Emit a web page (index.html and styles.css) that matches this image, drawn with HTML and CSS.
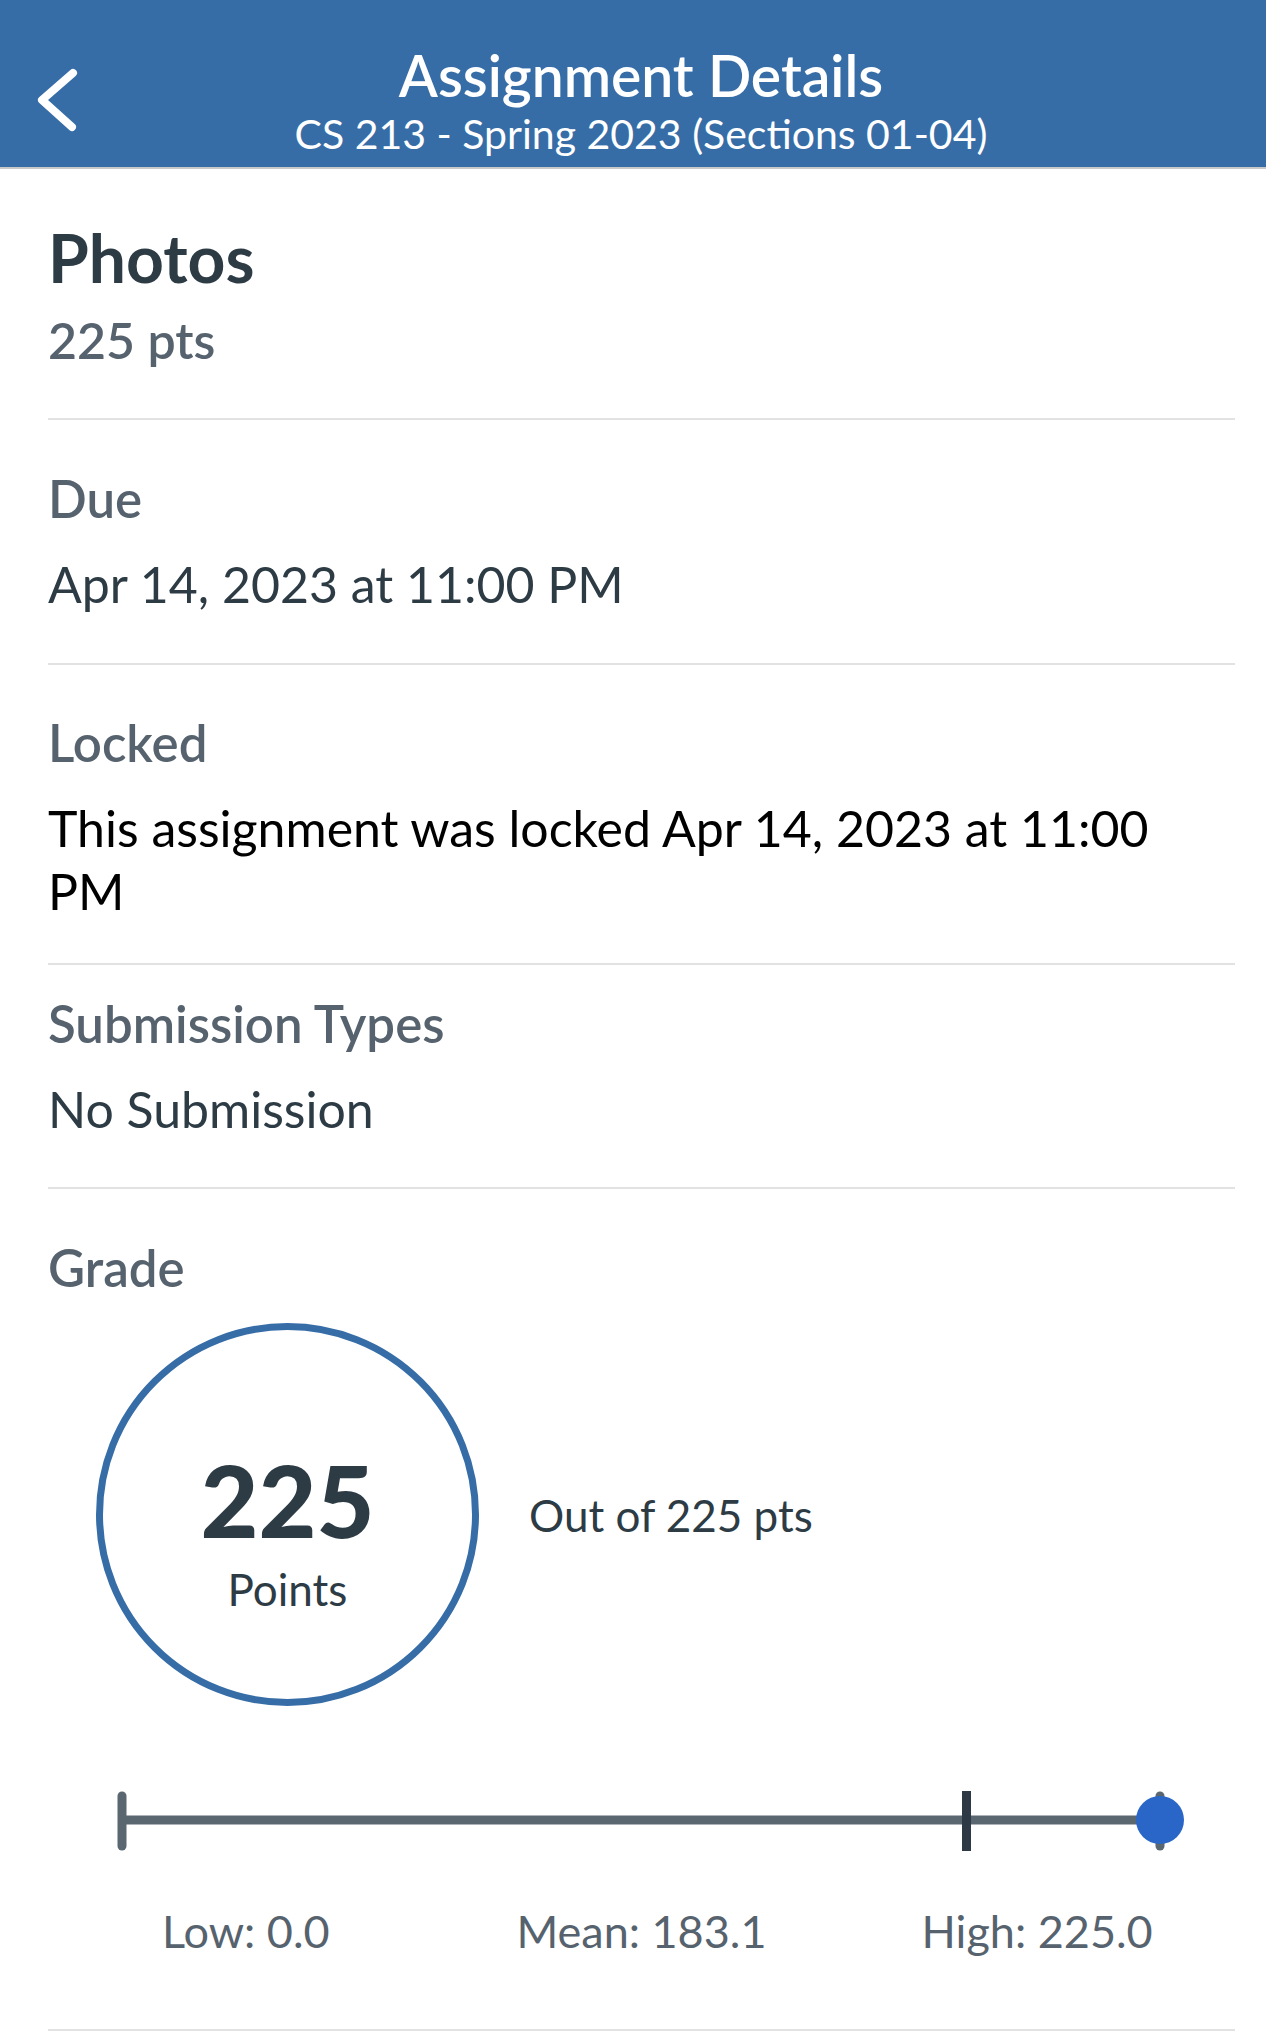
FILE: index.html
```html
<!DOCTYPE html>
<html lang="en">
<head>
<meta charset="utf-8">
<title>Assignment Details</title>
<link rel="stylesheet" href="styles.css">
</head>
<body>
<header class="navbar">
  <button class="back" aria-label="Back">
    <svg width="60" height="80" viewBox="0 0 60 80"><polyline points="45,13 14,40 44,67" fill="none" stroke="#fff" stroke-width="8" stroke-linecap="round" stroke-linejoin="round"/></svg>
  </button>
  <div class="nav-titles">
    <div class="nav-title">Assignment Details</div>
    <div class="nav-subtitle">CS 213 - Spring 2023 (Sections 01-04)</div>
  </div>
  <div></div>
</header>
<main class="content">
  <section class="summary">
    <h1 class="title">Photos</h1>
    <div class="points">225 pts</div>
  </section>
  <section class="detail">
    <div class="label">Due</div>
    <div class="value">Apr 14, 2023 at 11:00 PM</div>
  </section>
  <section class="detail locked">
    <div class="label">Locked</div>
    <div class="value value-black">This assignment was locked Apr 14, 2023 at 11:00 PM</div>
  </section>
  <section class="detail compact">
    <div class="label">Submission Types</div>
    <div class="value">No Submission</div>
  </section>
  <section class="grade">
    <div class="label">Grade</div>
    <div class="grade-row">
      <div class="circle">
        <div class="score">225</div>
        <div class="score-unit">Points</div>
      </div>
      <div class="out-of">Out of 225 pts</div>
    </div>
    <svg class="stats-bar" width="1187" height="70" viewBox="0 0 1187 70">
      <line x1="74" y1="35" x2="1112" y2="35" stroke="#5A6670" stroke-width="9"/>
      <line x1="74" y1="11" x2="74" y2="61" stroke="#5A6670" stroke-width="9" stroke-linecap="round"/>
      <line x1="1112" y1="11" x2="1112" y2="61" stroke="#5A6670" stroke-width="9" stroke-linecap="round"/>
      <rect x="914" y="6" width="9" height="60" fill="#2D3A45"/>
      <circle cx="1112" cy="35" r="24" fill="#2A66C8"/>
    </svg>
    <div class="stats-labels">
      <span>Low: 0.0</span>
      <span>Mean: 183.1</span>
      <span>High: 225.0</span>
    </div>
  </section>
</main>
</body>
</html>
```

FILE: styles.css
```css
* { box-sizing: border-box; }

body {
  margin: 0;
  background: #ffffff;
  font-family: Lato, "Open Sans", "Liberation Sans", sans-serif;
  color: #2D3B45;
}

.navbar {
  display: grid;
  grid-template-columns: 1fr auto 1fr;
  align-items: start;
  height: 169px;
  background: #376DA7;
  border-bottom: 2px solid #C9C9C9;
  color: #ffffff;
}

.back {
  justify-self: start;
  margin: 60px 0 0 28px;
  width: 60px;
  height: 80px;
  padding: 0;
  border: 0;
  background: none;
}

.back svg { display: block; }

.nav-titles {
  padding: 45px 0 0 16px;
  text-align: center;
  white-space: nowrap;
}

.nav-title {
  font-size: 57px;
  font-weight: 600;
  line-height: 60px;
}

.nav-subtitle {
  margin-top: 7px;
  font-size: 41px;
  font-weight: 400;
  line-height: 44px;
}

.content {
  padding: 0 31px 0 48px;
}

.content section {
  border-bottom: 2px solid #E2E2E2;
}

.summary {
  padding: 49px 0 49px;
}

.title {
  margin: 0;
  font-size: 66px;
  font-weight: 700;
  line-height: 80px;
  color: #2D3B45;
}

.points {
  margin-top: 13px;
  font-size: 50px;
  font-weight: 600;
  line-height: 58px;
  color: #56636E;
}

.detail {
  padding: 49px 0 46.5px;
}

.detail.locked {
  padding: 48px 0 40.5px;
}

.detail.compact {
  padding-top: 28.5px;
}

.label {
  font-size: 51px;
  font-weight: 600;
  line-height: 60px;
  color: #56636E;
}

.value {
  max-width: 1170px;
  margin-top: 24px;
  font-size: 50px;
  font-weight: 400;
  line-height: 63px;
  color: #2D3B45;
}

.value-black {
  color: #000000;
}

.grade {
  padding: 48.5px 0 72px;
}

.grade-row {
  display: flex;
  align-items: center;
  gap: 50px;
  margin: 25.5px 0 0 48px;
}

.circle {
  display: flex;
  flex-direction: column;
  align-items: center;
  flex: none;
  width: 383px;
  height: 383px;
  padding-top: 119px;
  border: 7px solid #376DA7;
  border-radius: 50%;
}

.score {
  font-size: 100px;
  font-weight: 900;
  line-height: 100px;
  color: #2D3B45;
}

.score-unit {
  margin-top: 15px;
  font-size: 44px;
  font-weight: 400;
  line-height: 50px;
  color: #2D3B45;
}

.out-of {
  font-size: 44px;
  font-weight: 400;
  line-height: 52px;
  color: #2D3B45;
}

.stats-bar {
  display: block;
  margin-top: 79px;
}

.stats-labels {
  display: grid;
  grid-template-columns: repeat(3, 1fr);
  margin-top: 50px;
  font-size: 45px;
  line-height: 52px;
  color: #56636E;
  text-align: center;
}
```
